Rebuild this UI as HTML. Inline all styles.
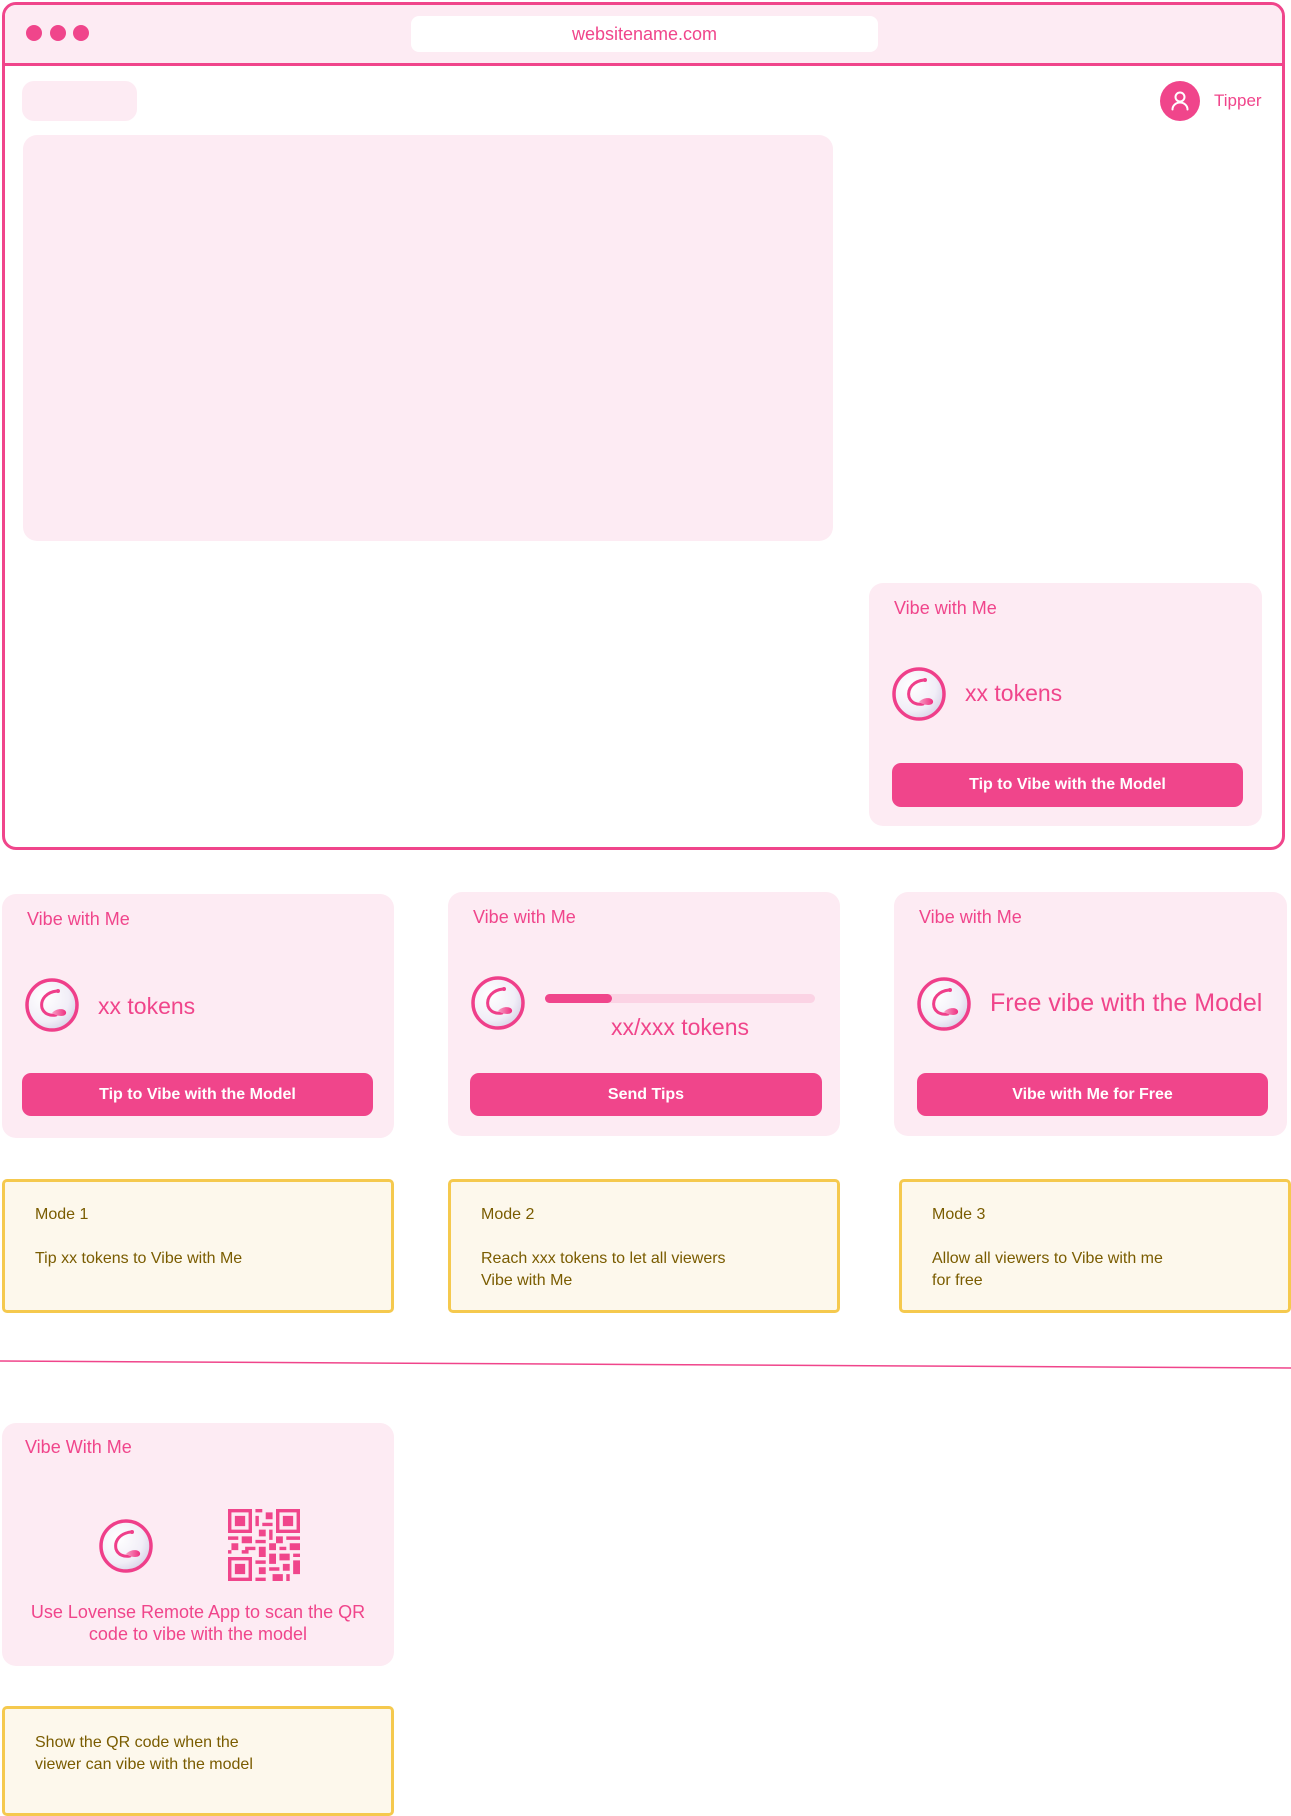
<!DOCTYPE html>
<html><head><meta charset="utf-8"><style>
*{box-sizing:border-box;margin:0;padding:0}
body{width:1291px;height:1798px;position:relative;background:#fff;font-family:"Liberation Sans",sans-serif;overflow:hidden;color:#f0458b}
.a{position:absolute}
.card{position:absolute;background:#fdebf3;border-radius:14px}
.t{position:absolute;font-size:18px;color:#f0458b;white-space:nowrap}
.btn{position:absolute;background:#f0458b;color:#fff;font-weight:bold;font-size:16px;border-radius:9px;display:flex;align-items:center;justify-content:center}
.mode{position:absolute;background:#fdf8ec;border:3px solid #f5c94e;border-radius:5px;color:#7a5c00;font-size:16px;line-height:22px}
.logo{position:absolute;width:56px;height:56px}
</style></head><body>
<svg width="0" height="0" style="position:absolute"><defs>
<radialGradient id="g" cx="0.35" cy="0.35" r="0.7"><stop offset="0" stop-color="#fff"/><stop offset="0.7" stop-color="#f1eef7"/><stop offset="1" stop-color="#d9d4e8"/></radialGradient>
<linearGradient id="p" x1="0" y1="0" x2="1" y2="0"><stop offset="0" stop-color="#f7a0c6"/><stop offset="1" stop-color="#ef2f80"/></linearGradient>
<symbol id="lg" viewBox="0 0 56 56"><circle cx="28" cy="28" r="25" fill="url(#g)" stroke="#ef3f8a" stroke-width="3.5"/><path d="M33 14c-10 1-17 8-15 17 2 6 8 8 14 7" fill="none" stroke="#ef3f8a" stroke-width="3" stroke-linecap="round"/><path d="M28 36c4-5 13-5 14-1 1 4-6 6-14 1z" fill="url(#p)"/><circle cx="34" cy="14" r="2" fill="#ef3f8a"/></symbol>
</defs></svg>

<div class="a" style="left:2px;top:2px;width:1283px;height:848px;border:3px solid #f0458b;border-radius:14px;overflow:hidden">
 <div class="a" style="left:0;top:0;width:100%;height:61px;background:#fdebf3;border-bottom:3px solid #f0458b"></div>
 <div class="a" style="left:21px;top:20px;width:16px;height:16px;border-radius:50%;background:#f0458b"></div>
 <div class="a" style="left:45px;top:20px;width:16px;height:16px;border-radius:50%;background:#f0458b"></div>
 <div class="a" style="left:68px;top:20px;width:16px;height:16px;border-radius:50%;background:#f0458b"></div>
 <div class="a" style="left:406px;top:11px;width:467px;height:36px;background:#fff;border-radius:8px;font-size:18px;display:flex;align-items:center;justify-content:center">websitename.com</div>
 <div class="a" style="left:17px;top:76px;width:115px;height:40px;background:#fdebf3;border-radius:12px"></div>
 <div class="a" style="left:1155px;top:76px;width:40px;height:40px;border-radius:50%;background:#f0458b"><svg width="40" height="40" viewBox="0 0 40 40"><circle cx="20" cy="16" r="4.5" fill="none" stroke="#fff" stroke-width="2"/><path d="M12.5 28.5c0-4 3.5-7 7.5-7s7.5 3 7.5 7" fill="none" stroke="#fff" stroke-width="2" stroke-linecap="round"/></svg></div>
 <div class="t" style="left:1209px;top:86px;font-size:17px">Tipper</div>
 <div class="a" style="left:18px;top:130px;width:810px;height:406px;background:#fdebf3;border-radius:14px"></div>
</div>

<div class="card" style="left:869px;top:583px;width:393px;height:243px"></div>
<div class="t" style="left:894px;top:598px">Vibe with Me</div>
<svg class="logo" style="left:891px;top:666px"><use href="#lg"/></svg>
<div class="t" style="left:965px;top:680px;font-size:23px">xx tokens</div>
<div class="btn" style="left:892px;top:763px;width:351px;height:44px">Tip to Vibe with the Model</div>

<div class="card" style="left:2px;top:894px;width:392px;height:244px"></div>
<div class="t" style="left:27px;top:909px">Vibe with Me</div>
<svg class="logo" style="left:24px;top:977px"><use href="#lg"/></svg>
<div class="t" style="left:98px;top:993px;font-size:23px">xx tokens</div>
<div class="btn" style="left:22px;top:1073px;width:351px;height:43px">Tip to Vibe with the Model</div>

<div class="card" style="left:448px;top:892px;width:392px;height:244px"></div>
<div class="t" style="left:473px;top:907px">Vibe with Me</div>
<svg class="logo" style="left:470px;top:975px"><use href="#lg"/></svg>
<div class="a" style="left:545px;top:994px;width:270px;height:9px;border-radius:5px;background:#fbd3e4"><div style="width:67px;height:9px;border-radius:5px;background:#f0458b"></div></div>
<div class="t" style="left:545px;width:270px;text-align:center;top:1014px;font-size:23px">xx/xxx tokens</div>
<div class="btn" style="left:470px;top:1073px;width:352px;height:43px">Send Tips</div>

<div class="card" style="left:894px;top:892px;width:393px;height:244px"></div>
<div class="t" style="left:919px;top:907px">Vibe with Me</div>
<svg class="logo" style="left:916px;top:976px"><use href="#lg"/></svg>
<div class="t" style="left:990px;top:989px;font-size:25px">Free vibe with the Model</div>
<div class="btn" style="left:917px;top:1073px;width:351px;height:43px">Vibe with Me for Free</div>

<div class="mode" style="left:2px;top:1179px;width:392px;height:134px;padding:22px 0 0 30px">Mode 1<br><div style="height:22px"></div>Tip xx tokens to Vibe with Me</div>
<div class="mode" style="left:448px;top:1179px;width:392px;height:134px;padding:22px 0 0 30px">Mode 2<br><div style="height:22px"></div>Reach xxx tokens to let all viewers<br>Vibe with Me</div>
<div class="mode" style="left:899px;top:1179px;width:392px;height:134px;padding:22px 0 0 30px">Mode 3<br><div style="height:22px"></div>Allow all viewers to Vibe with me<br>for free</div>

<svg class="a" style="left:0;top:1355px" width="1291" height="20"><line x1="0" y1="6" x2="1291" y2="13" stroke="#f0458b" stroke-width="1.5"/></svg>

<div class="card" style="left:2px;top:1423px;width:392px;height:243px"></div>
<div class="t" style="left:25px;top:1437px">Vibe With Me</div>
<svg class="logo" style="left:98px;top:1518px"><use href="#lg"/></svg>
<svg class="a" style="left:228px;top:1509px" width="72" height="72" viewBox="0 0 21 21" fill="#f0458b">
<path d="M0 0h7v7h-7zM1 1v5h5v-5zM2 2h3v3h-3z" fill-rule="evenodd"/>
<path d="M14 0h7v7h-7zM15 1v5h5v-5zM16 2h3v3h-3z" fill-rule="evenodd"/>
<path d="M0 14h7v7h-7zM1 15v5h5v-5zM2 16h3v3h-3z" fill-rule="evenodd"/>
<path d="M8 0h2v1h-2zM11 1h2v2h-2zM8 2h1v3h-1zM10 4h3v1h-3zM9 6h2v2h-2zM12 6h1v3h-1zM0 8h3v1h-3zM4 8h3v2h-3zM1 10h2v2h-2zM5 11h3v1h-3zM8 9h3v1h-3zM14 8h2v2h-2zM17 8h4v1h-4zM18 10h3v2h-3zM15 11h2v1h-2zM9 11h2v3h-2zM12 10h2v2h-2zM8 15h3v1h-3zM12 13h2v3h-2zM15 13h3v2h-3zM19 13h2v1h-2zM9 17h2v2h-2zM12 17h3v1h-3zM16 16h2v2h-2zM19 15h2v4h-2zM13 19h3v2h-3zM8 20h3v1h-3zM17 19h1v2h-1zM4 12h2v1h-2zM0 12h1v1h-1z"/>
</svg>
<div class="t" style="left:2px;width:392px;text-align:center;top:1601px;line-height:22px;white-space:normal;padding:0 20px">Use Lovense Remote App to scan the QR code to vibe with the model</div>

<div class="mode" style="left:2px;top:1706px;width:392px;height:110px;padding:23px 0 0 30px">Show the QR code when the<br>viewer can vibe with the model</div>
</body></html>
